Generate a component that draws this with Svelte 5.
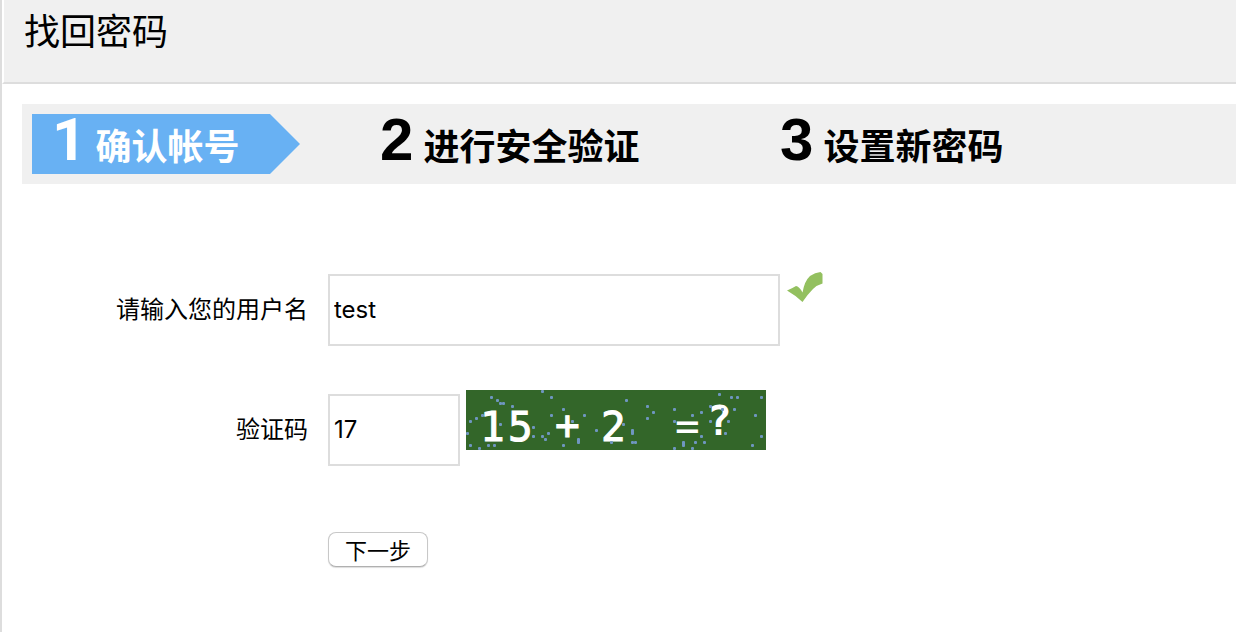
<script>
  let username = $state('test');
  let answer = $state('17');

  const steps = [
    { number: 1, label: '确认帐号' },
    { number: 2, label: '进行安全验证' },
    { number: 3, label: '设置新密码' }
  ];

  // Noise specks as [column, row, height in cells] on a 100 x 20 grid
  const specks = [
    [25, 0], [8, 2], [28, 2], [10, 3], [11, 4], [12, 4], [15, 5], [32, 6], [5, 8], [3, 9],
    [1, 10], [11, 11], [28, 8], [39, 8], [35, 10], [22, 12], [0, 14], [27, 14], [43, 13],
    [22, 15], [25, 15], [26, 16], [37, 16, 2], [1, 18], [7, 18], [9, 18], [4, 19], [32, 18],
    [48, 17], [53, 3], [60, 5], [62, 7], [60, 9], [52, 11], [55, 13, 2], [55, 17], [56, 17],
    [69, 6], [75, 8], [78, 7], [69, 10], [84, 1], [88, 2], [90, 2], [98, 2], [81, 5], [85, 6],
    [89, 6], [96, 8], [81, 10], [87, 10], [86, 14], [78, 15], [98, 15], [72, 17, 2], [76, 17],
    [79, 17], [69, 19], [75, 19], [95, 18]
  ];
</script>

<main class="panel">
  <header class="heading">
    <h1>找回密码</h1>
  </header>

  <ol class="steps">
    {#each steps as step, i}
      <li>
        <div class="step" class:current={i === 0} aria-current={i === 0 ? 'step' : undefined}>
          <span class="number">{step.number}</span>
          <span class="label">{step.label}</span>
        </div>
      </li>
    {/each}
  </ol>

  <form class="form" onsubmit={(e) => e.preventDefault()}>
    <label for="username">请输入您的用户名</label>
    <div class="field">
      <input id="username" class="wide" type="text" bind:value={username} />
      <svg class="tick" width="36" height="32" viewBox="0 0 36 32" aria-hidden="true">
        <path d="M0 18.5 Q5 16.5 9 14 Q12 14 15.5 20.5 Q17.5 9 23 4 Q28 .5 33.5 0 L35.5 2 V11.5 Q30 13 26 17 Q20 23 15.5 30 Q8 23 0 18.5Z" fill="#93c05f" />
      </svg>
    </div>

    <label for="answer">验证码</label>
    <div class="field">
      <input id="answer" class="short" type="text" bind:value={answer} />
      <svg class="captcha" width="300" height="60" viewBox="0 0 300 60">
        <rect width="300" height="60" fill="#336629" />
        <g class="digits">
          <text x="14 42" y="51">15</text>
          <text x="89" y="49">+</text>
          <text x="135" y="51">2</text>
          <text class="thin" x="209" y="50">=</text>
          <text class="heavy" x="241" y="45">?</text>
        </g>
        {#each specks as [x, y, h = 1]}
          <rect x={x * 3} y={y * 3} width="3" height={h * 3} rx="1" fill="#6f96c0" />
        {/each}
      </svg>
    </div>

    <div class="actions">
      <button type="submit">下一步</button>
    </div>
  </form>
</main>

<style>
  :global(body) {
    margin: 0;
    background: #fff;
  }

  .panel {
    box-sizing: border-box;
    min-height: 100vh;
    border-left: 2px solid #ddd;
    color: #000;
    font-family: 'Noto Sans CJK SC', sans-serif;
    font-size: 24px;
  }

  .heading {
    box-sizing: border-box;
    padding: 2px 20px 26px;
    border-left: 2px solid #fff;
    border-bottom: 2px solid #ddd;
    background: #f0f0f0;
  }

  h1 {
    margin: 0;
    font-size: 36px;
    font-weight: 400;
    line-height: 54px;
  }

  .steps {
    display: grid;
    grid-template-columns: 348px 400px 1fr;
    margin: 20px 0 0 20px;
    padding: 10px;
    background: #f0f0f0;
    list-style: none;
  }

  .step {
    display: flex;
    align-items: baseline;
    box-sizing: border-box;
    height: 60px;
    font-weight: 700;
    white-space: nowrap;
  }

  .number {
    margin-right: 10px;
    font-family: 'Liberation Sans', sans-serif;
    font-size: 60px;
    line-height: 52px;
  }

  .current {
    width: 268px;
    padding-left: 20px;
    background: #68b1f3;
    color: #fff;
    clip-path: polygon(0 0, 238px 0, 100% 50%, 238px 100%, 0 100%);
  }

  .current .number {
    margin-right: 9px;
    font-family: Roboto, sans-serif;
  }

  .label {
    font-size: 36px;
    line-height: 52px;
  }

  .form {
    display: grid;
    grid-template-columns: 306px 1fr;
    column-gap: 20px;
    row-gap: 44px;
    margin-top: 90px;
  }

  label {
    align-self: end;
    padding-bottom: 4px;
    line-height: 68px;
    text-align: right;
    white-space: nowrap;
  }

  .field {
    display: flex;
    align-items: flex-start;
  }

  input {
    box-sizing: border-box;
    height: 72px;
    padding: 0 4px 2px;
    border: 2px solid #ddd;
    border-radius: 0;
    outline: none;
    background: #fff;
    color: #000;
    font-family: Inter, sans-serif;
    font-size: 24px;
  }

  .wide {
    width: 452px;
  }

  .short {
    width: 132px;
    margin-top: 4px;
  }

  .tick {
    margin: -2px 0 0 7px;
  }

  .captcha {
    margin-left: 6px;
  }

  .actions {
    grid-column: 2;
    margin-top: 22px;
  }

  .digits {
    fill: #fff;
    stroke: #fff;
    stroke-width: 1;
    font-family: 'DejaVu Sans Mono', monospace;
    font-size: 41px;
  }

  .thin {
    stroke: none;
  }

  .heavy {
    font-weight: 700;
    stroke: none;
  }

  button {
    display: block;
    height: 35px;
    padding: 0 16px 2px;
    border: 1px solid #c8c8c8;
    border-bottom-color: #b0b0b0;
    border-radius: 8px;
    background: #fff;
    box-shadow: 0 1px 1px #ddd;
    color: #000;
    font-family: inherit;
    font-size: 22px;
    line-height: 30px;
  }
</style>
